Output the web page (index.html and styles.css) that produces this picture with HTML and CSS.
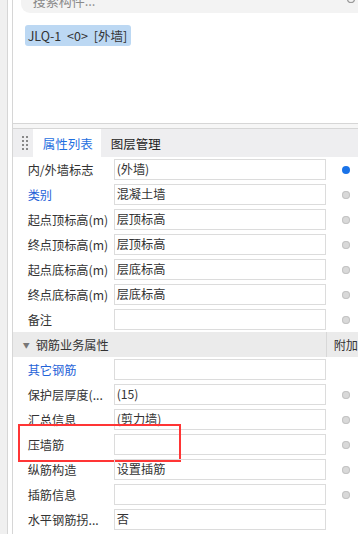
FILE: index.html
```html
<!DOCTYPE html>
<html>
<head>
  <meta charset="utf-8">
  <title>属性列表</title>
  <link rel="stylesheet" href="styles.css">
</head>
<body>
  <div class="page">
    <div class="side-strip"></div>
    <div class="main">

      <!-- component list -->
      <section class="top-panel">
        <div class="search">
          <span class="search-text">搜索构件...</span>
          <svg class="search-icon" width="10" height="10" viewBox="0 0 10 10"><circle cx="5" cy="3" r="3.5" fill="none" stroke="#9a9a9a" stroke-width="1.2"/></svg>
        </div>
        <div class="tag">JLQ-1 &lt;0&gt; [外墙]</div>
      </section>

      <!-- properties -->
      <section class="prop-panel">
        <div class="tabs">
          <span class="grip"></span>
          <span class="tab active">属性列表</span>
          <span class="tab">图层管理</span>
        </div>

        <div class="row"><span class="label">内/外墙标志</span><span class="value">(外墙)</span><span class="dot on"></span></div>
        <div class="row"><span class="label link">类别</span><span class="value">混凝土墙</span><span class="dot"></span></div>
        <div class="row"><span class="label">起点顶标高(m)</span><span class="value">层顶标高</span><span class="dot"></span></div>
        <div class="row"><span class="label">终点顶标高(m)</span><span class="value">层顶标高</span><span class="dot"></span></div>
        <div class="row"><span class="label">起点底标高(m)</span><span class="value">层底标高</span><span class="dot"></span></div>
        <div class="row"><span class="label">终点底标高(m)</span><span class="value">层底标高</span><span class="dot"></span></div>
        <div class="row"><span class="label">备注</span><span class="value"></span><span class="dot"></span></div>

        <div class="group">
          <span class="group-title"><span class="caret">▼</span>钢筋业务属性</span>
          <span class="group-extra">附加</span>
        </div>

        <div class="row"><span class="label link">其它钢筋</span><span class="value"></span><span></span></div>
        <div class="row"><span class="label">保护层厚度(...</span><span class="value">(15)</span><span class="dot"></span></div>
        <div class="row"><span class="label">汇总信息</span><span class="value">(剪力墙)</span><span class="dot"></span></div>
        <div class="row marked"><span class="label">压墙筋</span><span class="value"></span><span class="dot"></span><span class="mark"></span></div>
        <div class="row"><span class="label">纵筋构造</span><span class="value">设置插筋</span><span class="dot"></span></div>
        <div class="row"><span class="label">插筋信息</span><span class="value"></span><span class="dot"></span></div>
        <div class="row"><span class="label">水平钢筋拐...</span><span class="value">否</span><span></span></div>
      </section>
    </div>
  </div>
</body>
</html>
```

FILE: styles.css
```css
body {
  margin: 0;
  font-family: "Noto Sans CJK SC", "Noto Sans", sans-serif;
  font-size: 12.2px;
  color: #333;
  background-color: #fff;
  overflow: hidden;
}

.page {
  display: flex;
  height: 534px;
}

.side-strip {
  width: 7px;
  background-color: #f0f0f0;
  border-right: 1px solid #d6d6d6;
  margin-right: 4px;
}

.main {
  flex: 1;
  display: flex;
  flex-direction: column;
  border-left: 1px solid #d6d6d6;
  background-color: #f6f6f6;
}

.top-panel {
  height: 123px;
  background-color: #fff;
  border-bottom: 1px solid #d6d6d6;
  margin-bottom: 4px;
  overflow: hidden;
}

.search {
  position: relative;
  margin: -15px 0 0 8px;
  height: 28px;
  background-color: #f3f3f3;
  border-radius: 0 0 0 9px;
}

.search-text {
  position: absolute;
  left: 12px;
  top: 6px;
  color: #8a8a8a;
  font-size: 13px;
}

.search-icon {
  position: absolute;
  right: 2px;
  top: 11px;
}

.tag {
  display: inline-block;
  margin: 12px 0 0 12px;
  padding: 0 4px 0 3px;
  height: 21px;
  line-height: 21px;
  background-color: #bcd8f3;
  border-radius: 3px;
  font-size: 12.5px;
  word-spacing: 3px;
  color: #333;
}

.prop-panel {
  flex: 1;
  background-color: #fff;
  border-top: 1px solid #d6d6d6;
}

.tabs {
  display: flex;
  height: 28px;
  align-items: stretch;
  background-color: #eeeef0;
}

.grip {
  width: 7px;
  background-image: radial-gradient(circle, #888 1px, transparent 1.3px);
  background-size: 4px 4px;
  margin: 6px 5px 6px 8px;
}

.tab {
  display: flex;
  align-items: center;
  padding: 0 8px 0 10px;
  font-size: 12.5px;
  color: #222;
}

.tab.active {
  background-color: #fff;
  color: #1f6fe0;
}

.row {
  position: relative;
  display: grid;
  grid-template-columns: 101px 212px 1fr;
  height: 25px;
  align-items: center;
}

.label {
  padding-left: 15px;
  white-space: nowrap;
  overflow: hidden;
}

.label.link {
  color: #1f63d8;
}

.value {
  height: 19px;
  line-height: 19px;
  border: 1px solid #dcdcdc;
  padding-left: 2px;
  white-space: nowrap;
}

.dot {
  justify-self: center;
  width: 8px;
  height: 8px;
  border-radius: 50%;
  background-color: #d9d9d9;
  box-shadow: inset 0 0 0 1px #c4c4c4;
  margin-left: 8px;
}

.dot.on {
  background-color: #1a73e8;
  box-shadow: none;
}

.group {
  display: grid;
  grid-template-columns: 313px 1fr;
  height: 25px;
  background-color: #ebebeb;
  align-items: center;
}

.group-title {
  display: flex;
  align-items: center;
}

.caret {
  font-size: 7px;
  color: #777;
  margin: 0 6px 0 10px;
}

.group-extra {
  height: 100%;
  display: flex;
  align-items: center;
  padding-left: 7px;
  border-left: 1px solid #d8d8d8;
  white-space: nowrap;
}

.mark {
  position: absolute;
  left: 5px;
  top: -8px;
  width: 159px;
  height: 34px;
  border: 2px solid #ff3535;
}
```
